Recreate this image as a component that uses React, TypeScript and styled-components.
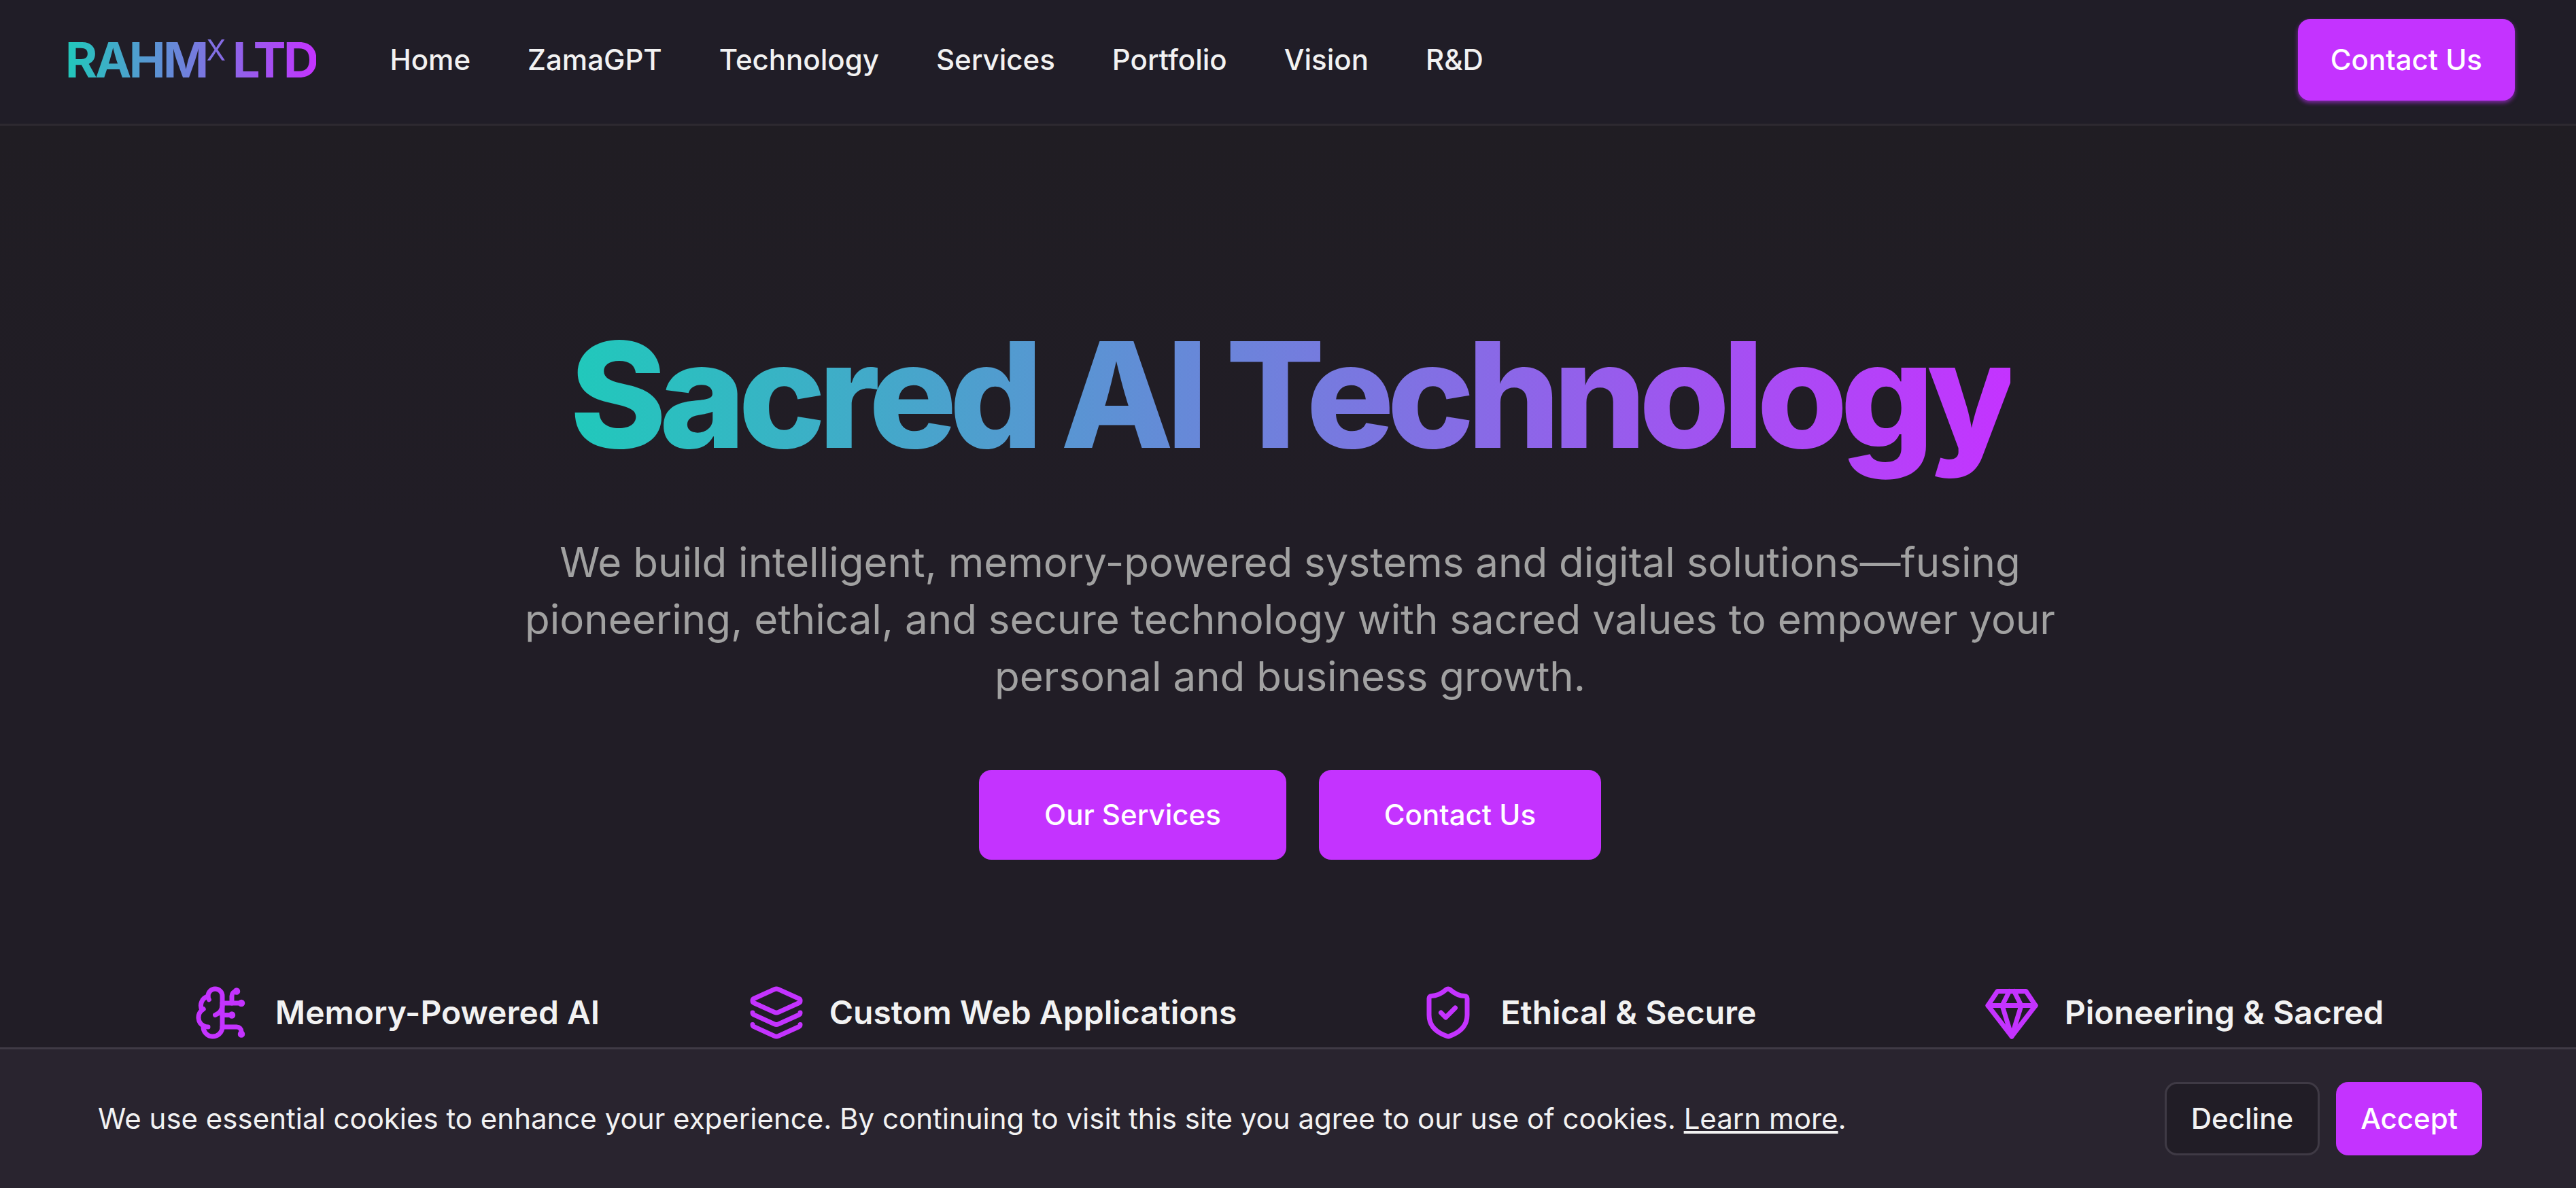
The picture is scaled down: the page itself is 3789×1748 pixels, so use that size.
import React from "react";
import styled, { createGlobalStyle, css } from "styled-components";
import { BrainCircuit, Layers, ShieldCheck } from "lucide-react";

const accent = "#c433ff";
const brandGradient = "linear-gradient(to right, #20c9bb, #c433ff)";

const GlobalStyle = createGlobalStyle`
  *, *::before, *::after { box-sizing: border-box; }
  body {
    margin: 0;
    background: #211d26;
    color: #f2f2f2;
    font-family: Inter, "Liberation Sans", sans-serif;
    font-size: 42px;
    line-height: 60px;
    overflow: hidden;
  }
  a { color: inherit; text-decoration: none; }
  h1, p, ul { margin: 0; padding: 0; }
  ul { list-style: none; }
`;

const Page = styled.div`
  min-height: 100vh;
  margin-right: -6px;
`;

const gradientText = css`
  background: ${brandGradient};
  background-clip: text;
  -webkit-background-clip: text;
  color: transparent;
`;

const Header = styled.header`
  display: flex;
  align-items: center;
  padding: 28px 96px 34px;
  background: #201d27;
  border-bottom: 3px solid #2d2930;
`;

const Logo = styled.a`
  ${gradientText}
  font-size: 72px;
  line-height: 96px;
  font-weight: 700;
  letter-spacing: -0.05em;
`;

const Superscript = styled.sup`
  font-size: 42px;
  line-height: 0;
  font-weight: 400;
  vertical-align: super;
`;

const Nav = styled.nav`
  display: flex;
  gap: 84px;
  margin-left: 108px;
  margin-right: auto;
  font-weight: 500;
`;

const Button = styled.button<{ $height: number; $padding: number; $raised?: boolean; $outline?: boolean }>`
  height: ${(p) => p.$height}px;
  padding: 0 ${(p) => p.$padding}px;
  border: ${(p) => (p.$outline ? "3px solid #3f3a45" : "0")};
  border-radius: 18px;
  background: ${(p) => (p.$outline ? "#211d26" : accent)};
  color: ${(p) => (p.$outline ? "#f2f2f2" : "#ffffff")};
  box-shadow: ${(p) => (p.$raised ? "0 3px 6px rgba(196, 51, 255, 0.6)" : "none")};
  font: inherit;
  font-weight: 500;
  white-space: nowrap;
  cursor: pointer;
`;

const Hero = styled.main`
  display: flex;
  flex-direction: column;
  align-items: center;
  padding: 288px 144px 144px;
  background: linear-gradient(to bottom, #201d23, #211d26 600px);
  text-align: center;
`;

const Title = styled.h1`
  ${gradientText}
  padding-bottom: 36px;
  font-size: 216px;
  line-height: 216px;
  font-weight: 800;
  letter-spacing: -0.05em;
`;

const Lead = styled.p`
  max-width: 2304px;
  margin: 60px 0 96px;
  color: #a1a1a1;
  font-size: 60px;
  line-height: 84px;
`;

const Actions = styled.div`
  display: flex;
  gap: 48px;
`;

const Features = styled.ul`
  display: grid;
  grid-template-columns: repeat(4, 1fr);
  gap: 48px;
  width: 100%;
  max-width: 3456px;
  margin-top: 183px;
`;

const Feature = styled.li`
  display: flex;
  align-items: center;
  justify-content: center;
  gap: 36px;
  font-size: 48px;
  line-height: 72px;
  font-weight: 600;

  svg { color: ${accent}; }
`;

const CookieBar = styled.aside`
  position: fixed;
  left: 0;
  right: -6px;
  bottom: 0;
  display: flex;
  align-items: center;
  justify-content: space-between;
  padding: 48px 144px;
  background: #29242f;
  border-top: 3px solid #3f3a45;
`;

const LearnMore = styled.a`
  text-decoration: underline;
`;

const CookieActions = styled.div`
  display: flex;
  gap: 24px;
`;

function Gem({ size }: { size: number }) {
  return (
    <svg
      width={size}
      height={size}
      viewBox="0 0 24 24"
      fill="none"
      stroke="currentColor"
      strokeWidth={2}
      strokeLinecap="round"
      strokeLinejoin="round"
      aria-hidden
    >
      <path d="M6 3h12l4 6-10 13L2 9Z" />
      <path d="M11 3 8 9l4 13 4-13-3-6" />
      <path d="M2 9h20" />
    </svg>
  );
}

const links = ["Home", "ZamaGPT", "Technology", "Services", "Portfolio", "Vision", "R&D"];

const features = [
  { Icon: BrainCircuit, label: "Memory-Powered AI" },
  { Icon: Layers, label: "Custom Web Applications" },
  { Icon: ShieldCheck, label: "Ethical & Secure" },
  { Icon: Gem, label: "Pioneering & Sacred" },
];

export default function App() {
  return (
    <Page>
      <GlobalStyle />
      <Header>
        <Logo href="#">
          RAHM<Superscript>X</Superscript> LTD
        </Logo>
        <Nav>
          {links.map((link) => (
            <a key={link} href="#">{link}</a>
          ))}
        </Nav>
        <Button $height={120} $padding={48} $raised>Contact Us</Button>
      </Header>
      <Hero>
        <Title>Sacred AI Technology</Title>
        <Lead>
          We build intelligent, memory-powered systems and digital solutions—fusing pioneering,
          ethical, and secure technology with sacred values to empower your personal and business
          growth.
        </Lead>
        <Actions>
          <Button $height={132} $padding={96}>Our Services</Button>
          <Button $height={132} $padding={96}>Contact Us</Button>
        </Actions>
        <Features>
          {features.map(({ Icon, label }) => (
            <Feature key={label}>
              <Icon size={84} />
              <span>{label}</span>
            </Feature>
          ))}
        </Features>
      </Hero>
      <CookieBar>
        <p>
          We use essential cookies to enhance your experience. By continuing to visit this site you
          agree to our use of cookies. <LearnMore href="#">Learn more</LearnMore>.
        </p>
        <CookieActions>
          <Button $height={108} $padding={36} $outline>Decline</Button>
          <Button $height={108} $padding={36}>Accept</Button>
        </CookieActions>
      </CookieBar>
    </Page>
  );
}
